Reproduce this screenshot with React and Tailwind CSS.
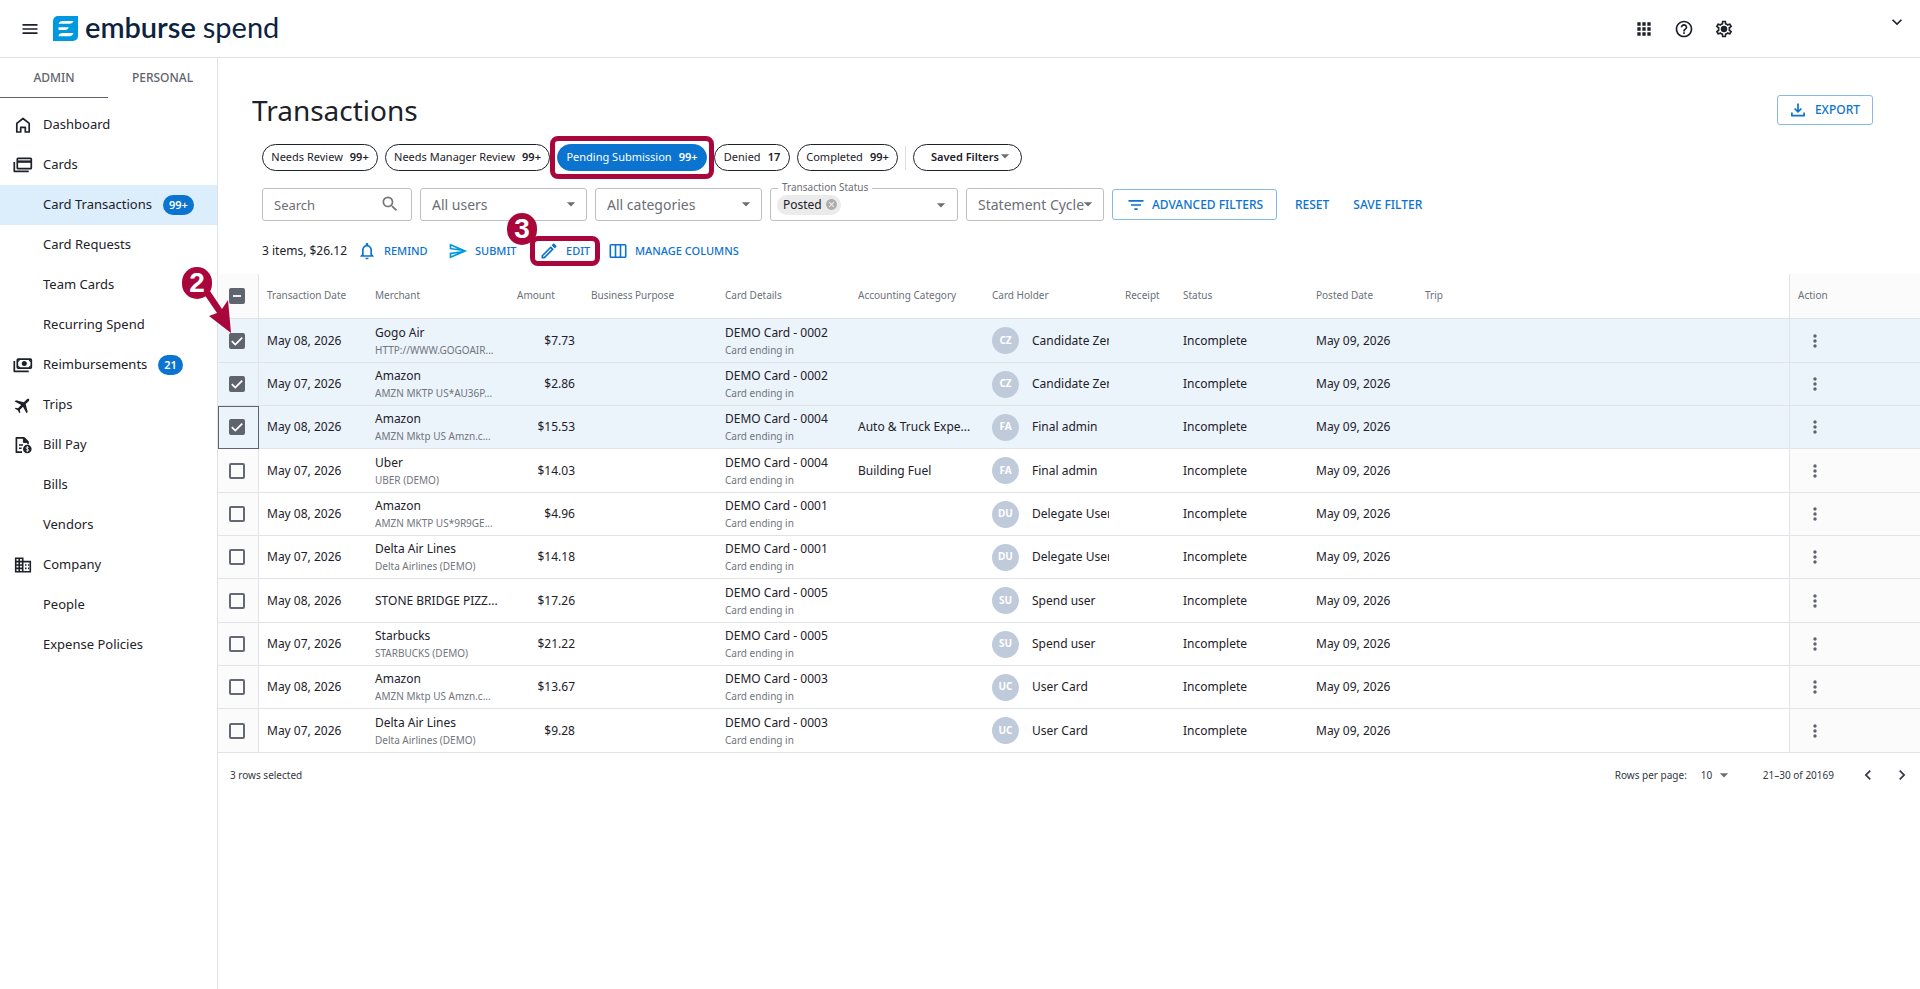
import { useState } from "react";
import {
  MdAirplanemodeActive,
  MdApps,
  MdArrowDropDown,
  MdCancel,
  MdChevronLeft,
  MdChevronRight,
  MdFilterList,
  MdHelpOutline,
  MdKeyboardArrowDown,
  MdMenu,
  MdMoreVert,
  MdNotificationsNone,
  MdOutlineModeEdit,
  MdOutlineSend,
  MdOutlineSettings,
  MdSearch,
} from "react-icons/md";

const HomeIcon = () => (
  <svg viewBox="0 0 20 20" className="w-5 h-5" fill="none" stroke="currentColor" strokeWidth="1.7" strokeLinejoin="round">
    <path d="M3.8 8.4 10 3.5l6.2 4.9v8.6h-3.9v-4.6H7.7V17H3.8Z" />
  </svg>
);

const CardsIcon = () => (
  <svg viewBox="0 0 20 20" className="w-5 h-5" fill="none" stroke="currentColor" strokeWidth="1.7" strokeLinejoin="round">
    <rect x="4.3" y="3.3" width="14" height="10.4" rx="0.8" />
    <path d="M4.3 6.6h14" strokeWidth="2.4" />
    <path d="M1.3 7v9.3h14.4" />
  </svg>
);

const CashIcon = () => (
  <svg viewBox="0 0 20 20" className="w-5 h-5" fill="none" stroke="currentColor" strokeWidth="1.7" strokeLinejoin="round">
    <rect x="4.3" y="4.1" width="14" height="9" rx="0.8" />
    <circle cx="11.3" cy="8.6" r="2.5" fill="currentColor" stroke="none" />
    <path d="M4.3 6.3a2 2 0 0 0 2-2M18.3 6.3a2 2 0 0 1-2-2M4.3 11a2 2 0 0 1 2 2M18.3 11a2 2 0 0 0-2 2" strokeWidth="1.2" />
    <path d="M1.3 6v10.3h14.4" />
  </svg>
);

const BillIcon = () => (
  <svg viewBox="0 0 20 20" className="w-5 h-5" fill="none" stroke="currentColor" strokeWidth="1.7" strokeLinejoin="round">
    <path d="M9 17.2H3.4V2.8H11l4 4v2.4" />
    <path d="M10.4 2.8v4.6H15Z" fill="currentColor" strokeWidth="1" />
    <path d="M6 10h4M6 13.3h2.6" strokeWidth="1.5" />
    <circle cx="14.3" cy="14" r="4.3" fill="currentColor" stroke="none" />
    <path d="M15.7 12.5c-.3-.5-2.700-.9-2.700.4 0 1.400 2.800.8 2.800 2.200 0 1.300-2.500 1.100-2.900.3M14.400 11.100v5.800" stroke="#fff" strokeWidth="0.8" />
  </svg>
);

const CompanyIcon = () => (
  <svg viewBox="0 0 20 20" className="w-5 h-5" fill="none" stroke="currentColor" strokeWidth="1.6">
    <path d="M2.7 3.2h7v13.6h-7ZM6.2 3.2v13.600M2.700 6.600h7M2.700 10h7M2.700 13.400h7M9.700 6.600h7.600v10.200H9.700" />
    <path d="M12 10h1.500M15 10h1.300M12 13.400h1.500M15 13.400h1.300" />
  </svg>
);

const SettingsIcon = () => (
  <svg viewBox="0 0 24 24" className="w-5 h-5">
    <MdOutlineSettings size={24} />
    <circle cx="12" cy="12" r="3.6" fill="currentColor" />
  </svg>
);

const DownloadIcon = () => (
  <svg viewBox="0 0 18 18" className="w-[18px] h-[18px]" fill="none" stroke="currentColor" strokeWidth="1.7">
    <path d="M9 2.500v8.200M5.600 7.500 9 10.900l3.400-3.400M2.900 11.500v3.200h12.200v-3.200" strokeLinejoin="round" />
  </svg>
);

const ColumnsIcon = () => (
  <svg viewBox="0 0 20 20" className="w-5 h-5" fill="none" stroke="currentColor" strokeWidth="1.6">
    <rect x="2.3" y="3.8" width="15.4" height="12.4" rx="0.8" />
    <path d="M7.500 3.800v12.400M12.500 3.800v12.400" />
  </svg>
);

const Logo = () => (
  <a href="#" className="flex items-center text-[#0c2340] whitespace-nowrap">
    <svg viewBox="0 0 25 25" className="w-[25px] h-[25px]">
      <path d="M5 0h20v20a5 5 0 0 1-5 5H0V5a5 5 0 0 1 5-5Z" fill="#0099e0" />
      <path d="M5.500 8.200c.6-2 2-3.200 4.200-3.200h10.800c-.6 1.800-1.900 2.700-4 2.700H9c-1.600 0-2.700.1-3.500.5ZM5.500 11.300h10.200c-.5 1.700-1.700 2.600-3.700 2.600H5.500ZM5.500 20.200c.4-2.400 1.800-3.100 4.200-3.100h10.800c-.5 2-1.900 3.100-4.200 3.100Z" fill="#fff" />
    </svg>
    <span className="ml-[7px] pb-1 font-['Lato',sans-serif] text-[29px] leading-8 font-semibold">emburse</span>
    <span className="ml-[7px] pb-1 font-['Lato',sans-serif] text-[29px] leading-8">spend</span>
  </a>
);

const NAV = [
  { label: "Dashboard", icon: <HomeIcon /> },
  { label: "Cards", icon: <CardsIcon /> },
  { label: "Card Transactions", badge: "99+", active: true },
  { label: "Card Requests" },
  { label: "Team Cards" },
  { label: "Recurring Spend" },
  { label: "Reimbursements", icon: <CashIcon />, badge: "21" },
  { label: "Trips", icon: <MdAirplanemodeActive size={20} className="rotate-45" /> },
  { label: "Bill Pay", icon: <BillIcon /> },
  { label: "Bills" },
  { label: "Vendors" },
  { label: "Company", icon: <CompanyIcon /> },
  { label: "People" },
  { label: "Expense Policies" },
];

const CHIPS = [
  { label: "Needs Review", count: "99+", width: "w-[116px]" },
  { label: "Needs Manager Review", count: "99+", width: "w-[165px]" },
  { label: "Pending Submission", count: "99+", width: "w-[150px]", active: true },
  { label: "Denied", count: "17", width: "w-[76px]" },
  { label: "Completed", count: "99+", width: "w-[101px]" },
];

const COLUMNS = [
  { label: "Transaction Date", width: "w-[108px]" },
  { label: "Merchant", width: "w-[142px]" },
  { label: "Amount", width: "w-[74px]" },
  { label: "Business Purpose", width: "w-[134px]" },
  { label: "Card Details", width: "w-[133px]" },
  { label: "Accounting Category", width: "w-[134px]" },
  { label: "Card Holder", width: "w-[133px]" },
  { label: "Receipt", width: "w-[58px]" },
  { label: "Status", width: "w-[133px]" },
  { label: "Posted Date", width: "w-[109px]" },
  { label: "Trip", width: "" },
];

const ROWS = [
  { date: "May 08, 2026", merchant: "Gogo Air", detail: "HTTP://WWW.GOGOAIR...", amount: "$7.73", card: "0002", category: "", initials: "CZ", holder: "Candidate Zer" },
  { date: "May 07, 2026", merchant: "Amazon", detail: "AMZN MKTP US*AU36P...", amount: "$2.86", card: "0002", category: "", initials: "CZ", holder: "Candidate Zer" },
  { date: "May 08, 2026", merchant: "Amazon", detail: "AMZN Mktp US Amzn.c...", amount: "$15.53", card: "0004", category: "Auto & Truck Expe...", initials: "FA", holder: "Final admin" },
  { date: "May 07, 2026", merchant: "Uber", detail: "UBER (DEMO)", amount: "$14.03", card: "0004", category: "Building Fuel", initials: "FA", holder: "Final admin" },
  { date: "May 08, 2026", merchant: "Amazon", detail: "AMZN MKTP US*9R9GE...", amount: "$4.96", card: "0001", category: "", initials: "DU", holder: "Delegate User" },
  { date: "May 07, 2026", merchant: "Delta Air Lines", detail: "Delta Airlines (DEMO)", amount: "$14.18", card: "0001", category: "", initials: "DU", holder: "Delegate User" },
  { date: "May 08, 2026", merchant: "STONE BRIDGE PIZZ...", detail: "", amount: "$17.26", card: "0005", category: "", initials: "SU", holder: "Spend user" },
  { date: "May 07, 2026", merchant: "Starbucks", detail: "STARBUCKS (DEMO)", amount: "$21.22", card: "0005", category: "", initials: "SU", holder: "Spend user" },
  { date: "May 08, 2026", merchant: "Amazon", detail: "AMZN Mktp US Amzn.c...", amount: "$13.67", card: "0003", category: "", initials: "UC", holder: "User Card" },
  { date: "May 07, 2026", merchant: "Delta Air Lines", detail: "Delta Airlines (DEMO)", amount: "$9.28", card: "0003", category: "", initials: "UC", holder: "User Card" },
];

const Checkbox = ({ label, checked, mixed, onChange }) => (
  <span className="relative block w-4 h-4 ml-[11px]">
    <input
      type="checkbox"
      aria-label={label}
      checked={checked}
      onChange={onChange}
      className="block appearance-none w-4 h-4 rounded-[2px] border-2 border-[#646973] checked:bg-[#5f646e] checked:border-[#5f646e]"
    />
    {checked && (
      <svg viewBox="0 0 16 16" className="absolute inset-0 w-4 h-4 pointer-events-none" fill="none" stroke="#fff" strokeWidth="1.8">
        <path d={mixed ? "M4 8h8" : "M2.8 8.2 6.3 11.6 13.2 4.6"} />
      </svg>
    )}
  </span>
);

const SelectField = ({ label, width }) => (
  <label className={`relative block shrink-0 ${width}`}>
    <select aria-label={label} className="block appearance-none w-full h-[33px] pl-[11px] rounded-[3px] border border-[#bfbfbf] bg-white text-[14px] text-[#6b6e75]">
      <option>{label}</option>
    </select>
    <MdArrowDropDown size={20} className="absolute right-[6px] top-[6px] text-[#6f6f6f] pointer-events-none" />
  </label>
);

const TwoLines = ({ top, bottom }) => (
  <>
    <div className="text-xs leading-[18px] truncate">{top}</div>
    {bottom && <div className="text-[10px] leading-4 text-[#71757d] truncate">{bottom}</div>}
  </>
);

const StepBadge = ({ number, className }) => (
  <span className={`absolute z-20 flex items-center justify-center w-[30px] h-8 rounded-full bg-[#a9063c] text-white font-['Liberation_Sans',sans-serif] text-[28px] leading-none font-bold pointer-events-none ${className}`}>
    {number}
  </span>
);

const Highlight = ({ className }) => (
  <span className={`absolute z-10 rounded-lg border-[5px] border-[#a9063c] pointer-events-none ${className}`} />
);

const Sidebar = () => (
  <aside className="w-[218px] shrink-0 border-r border-[#e0e2e5]">
    <div className="flex h-10 text-xs font-medium text-[#5f646e]">
      <button className="w-[108px] border-b border-[#5f646e]">ADMIN</button>
      <button className="flex-1">PERSONAL</button>
    </div>
    <nav className="mt-[7px]">
      {NAV.map((item) => (
        <a
          key={item.label}
          href="#"
          className={`flex items-center h-10 text-[13px] text-[#1d2129] ${item.active ? "bg-[#dcedfb]" : ""}`}
        >
          <span className="flex justify-center w-[46px] mr-[-3px]">{item.icon}</span>
          {item.label}
          {item.badge && (
            <span className="ml-[11px] flex items-center h-5 px-[6px] rounded-full bg-[#0b73d0] text-white text-[11px] font-semibold">
              {item.badge}
            </span>
          )}
        </a>
      ))}
    </nav>
  </aside>
);

const ToolButton = ({ icon, label, className, children }) => (
  <button className={`relative flex items-center font-medium text-[#0b73d0] whitespace-nowrap ${className}`}>
    {icon}
    {label}
    {children}
  </button>
);

const App = () => {
  const [selected, setSelected] = useState([0, 1, 2]);

  const toggle = (i) =>
    setSelected(selected.includes(i) ? selected.filter((s) => s !== i) : [...selected, i]);

  return (
    <div className="min-h-screen flex flex-col bg-white text-[#1d2129] font-['Noto_Sans',sans-serif]">
      <header className="flex items-center h-[58px] pl-[20px] border-b border-[#e0e2e5]">
        <button aria-label="Menu"><MdMenu size={20} /></button>
        <div className="ml-[13px]"><Logo /></div>
        <div className="ml-auto flex items-center gap-5">
          <button aria-label="Apps"><MdApps size={20} /></button>
          <button aria-label="Help"><MdHelpOutline size={20} /></button>
          <button aria-label="Settings"><SettingsIcon /></button>
        </div>
        <button aria-label="Account" className="self-start mt-3 ml-[153px] mr-[13px]"><MdKeyboardArrowDown size={20} /></button>
      </header>

      <div className="flex flex-1">
        <Sidebar />

        <main className="flex-1 min-w-0 pt-[37px]">
          <div className="flex items-center justify-between h-[30px] pl-[34px] pr-[47px]">
            <h1 className="text-[28px] leading-9">Transactions</h1>
            <button className="flex items-center h-[30px] pl-[11px] pr-[12px] gap-2 rounded-[3px] border border-[#85b9e7] text-xs font-medium text-[#0b73d0]">
              <DownloadIcon />
              EXPORT
            </button>
          </div>

          <div className="flex items-center gap-[7px] mt-[19px] pl-[44px]">
            {CHIPS.map((chip) => (
              <button
                key={chip.label}
                className={`relative flex items-center justify-center gap-[7px] h-[27px] shrink-0 rounded-full border text-[11px] whitespace-nowrap ${chip.width} ${
                  chip.active ? "bg-[#0b73d0] border-[#0b73d0] text-white" : "border-[#1d2129]"
                }`}
              >
                {chip.label}
                <span className="font-semibold">{chip.count}</span>
                {chip.active && <Highlight className="-inset-x-2 -inset-y-[9px]" />}
              </button>
            ))}
            <span className="w-px h-6 bg-[#dcdcdc]" />
            <label className="relative block">
              <select aria-label="Saved Filters" className="block appearance-none w-[109px] h-[27px] pl-[17px] rounded-full border border-[#1d2129] text-[11px] font-semibold">
                <option>Saved Filters</option>
              </select>
              <MdArrowDropDown size={20} className="absolute right-[7px] top-[2px] text-[#6f6f6f] pointer-events-none" />
            </label>
          </div>

          <div className="flex items-center gap-2 mt-[17px] pl-[44px]">
            <div className="relative w-[150px] shrink-0">
              <input aria-label="Search" placeholder="Search" className="block w-full h-[33px] pl-[11px] rounded-[3px] border border-[#bfbfbf] text-[13px] placeholder:text-[#6b6e75]" />
              <MdSearch size={20} className="absolute right-[12px] top-[6px] text-[#757575]" />
            </div>
            <SelectField label="All users" width="w-[167px]" />
            <SelectField label="All categories" width="w-[167px]" />
            <div className="relative flex items-center w-[188px] h-[33px] shrink-0 px-[6px] rounded-[3px] border border-[#bfbfbf]">
              <span className="absolute -top-[10px] left-[7px] px-1 bg-white text-[10px] leading-4 text-[#6b6e75]">Transaction Status</span>
              <span className="flex items-center gap-[3px] h-5 pl-[6px] pr-[3px] rounded-full bg-[#ebebeb] text-xs">
                Posted
                <button aria-label="Remove Posted"><MdCancel size={13} className="text-[#adadad]" /></button>
              </span>
              <button aria-label="Open status list" className="ml-auto"><MdArrowDropDown size={20} className="text-[#6f6f6f]" /></button>
            </div>
            <SelectField label="Statement Cycle" width="w-[138px]" />
            <button className="flex items-center justify-center gap-[6px] w-[165px] h-[31px] shrink-0 rounded-[3px] border border-[#85b9e7] text-xs font-medium text-[#0b73d0]">
              <MdFilterList size={20} />
              ADVANCED FILTERS
            </button>
            <ToolButton label="RESET" className="ml-[10px] text-xs" />
            <ToolButton label="SAVE FILTER" className="ml-[16px] text-xs" />
          </div>

          <div className="flex items-center h-[30px] mt-[15px] pl-[44px] text-[11px]">
            <span className="w-[95px] text-xs">3 items, $26.12</span>
            <ToolButton icon={<MdNotificationsNone size={20} className="mr-[7px]" />} label="REMIND" className="w-[91px]" />
            <ToolButton icon={<MdOutlineSend size={20} className="mr-[7px] text-[#0099e0]" />} label="SUBMIT" className="w-[91px]" />
            <ToolButton icon={<MdOutlineModeEdit size={20} className="mr-[7px]" />} label="EDIT" className="w-[69px]">
              <Highlight className="-left-[9px] right-[8px] -inset-y-[5px]" />
              <StepBadge number="3" className="-left-[32px] -top-[28px]" />
            </ToolButton>
            <ToolButton icon={<ColumnsIcon />} label={<span className="ml-[7px]">MANAGE COLUMNS</span>} />
          </div>

          <table className="w-full table-fixed mt-2 border-separate border-spacing-0 text-xs text-left">
            <thead>
              <tr className="h-[45px] text-[10px] text-[#6b6f78] [&>th]:font-normal [&>th]:border-b [&>th]:border-[#e2e3e8]">
                <th className="w-[41px] bg-[#fbfbfb] border-r">
                  <Checkbox label="Select all rows" checked={selected.length > 0} mixed onChange={() => setSelected([])} />
                </th>
                {COLUMNS.map((col) => (
                  <th key={col.label} className={`px-2 whitespace-nowrap ${col.width}`}>{col.label}</th>
                ))}
                <th className="w-[131px] px-2 border-l bg-[#fbfbfb]">Action</th>
              </tr>
            </thead>
            <tbody>
              {ROWS.map((row, i) => {
                const on = selected.includes(i);
                return (
                  <tr key={i} className={`h-[43px] nth-[3n+1]:h-[44px] [&>td]:border-b [&>td]:border-[#e2e3e8] ${on ? "bg-[#ebf3fb]" : ""}`}>
                    <td className={`relative border-r ${on ? "" : "bg-[#fbfbfb]"} ${i === 2 ? "outline outline-1 -outline-offset-1 outline-[#5f646e]" : ""}`}>
                      <Checkbox label={`Select row ${i + 1}`} checked={on} onChange={() => toggle(i)} />
                      {i === 0 && (
                        <>
                          <svg viewBox="0 0 40 50" className="absolute z-10 -left-[22px] -top-[34px] w-10 h-[50px] pointer-events-none" fill="#a9063c">
                            <path d="m8 9 6-3 12 18 6-9 3 33-22-17 8-3Z" />
                          </svg>
                          <StepBadge number="2" className="-left-[36px] -top-[52px]" />
                        </>
                      )}
                    </td>
                    <td className="px-2 whitespace-nowrap">{row.date}</td>
                    <td className="pl-2"><TwoLines top={row.merchant} bottom={row.detail} /></td>
                    <td className="px-2 text-right">{row.amount}</td>
                    <td />
                    <td className="px-2"><TwoLines top={`DEMO Card - ${row.card}`} bottom="Card ending in" /></td>
                    <td className="pl-2 whitespace-nowrap">{row.category}</td>
                    <td className="px-2">
                      <div className="flex items-center overflow-hidden whitespace-nowrap">
                        <span className="flex items-center justify-center w-[27px] h-[27px] mr-[13px] shrink-0 rounded-full bg-[#bfcbda] text-white text-[10px] font-bold">
                          {row.initials}
                        </span>
                        {row.holder}
                      </div>
                    </td>
                    <td />
                    <td className="px-2">Incomplete</td>
                    <td className="px-2 whitespace-nowrap">May 09, 2026</td>
                    <td />
                    <td className={`border-l ${on ? "" : "bg-[#fbfbfb]"}`}>
                      <button aria-label="Row actions" className="block ml-[15px] text-[#5f646e]"><MdMoreVert size={20} /></button>
                    </td>
                  </tr>
                );
              })}
            </tbody>
          </table>

          <div className="flex items-center h-[44px] pl-3 pr-2 text-[10px] text-[#33373f]">
            <span>3 rows selected</span>
            <label htmlFor="page-size" className="ml-auto">Rows per page:</label>
            <span className="relative ml-[14px] mr-[32px]">
              <select id="page-size" className="block appearance-none w-[30px] h-5">
                <option>10</option>
              </select>
              <MdArrowDropDown size={20} className="absolute -right-[3px] top-0 text-[#6f6f6f] pointer-events-none" />
            </span>
            <span>21–30 of 20169</span>
            <button aria-label="Previous page" className="ml-[24px]"><MdChevronLeft size={20} /></button>
            <button aria-label="Next page" className="ml-[14px]"><MdChevronRight size={20} /></button>
          </div>
        </main>
      </div>
    </div>
  );
};

export default App;
